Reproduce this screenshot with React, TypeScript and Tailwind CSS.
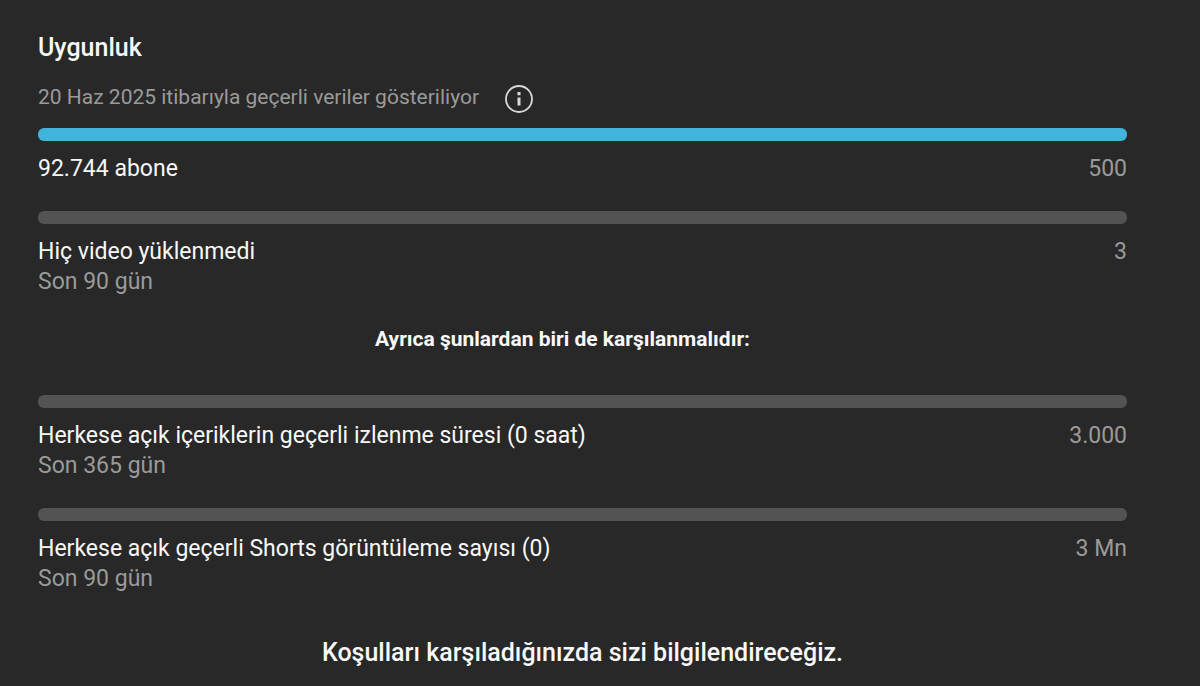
type RequirementProps = { id: string; title: string; period?: string; goal: string; done?: boolean };

function Requirement({ id, title, period, goal, done = false }: RequirementProps) {
  return (
    <div>
      <div
        role="progressbar"
        aria-labelledby={id}
        aria-valuenow={done ? 100 : 0}
        className={`h-[13px] rounded-md ${done ? "bg-[#42b3d9]" : "bg-[#535353]"}`}
      />
      <div className="mt-[13px] flex items-start justify-between text-[23px] leading-[30px] text-[#9a9a9a]">
        <div>
          <p id={id} className="text-[#f8f8f8]">{title}</p>
          {period && <p>{period}</p>}
        </div>
        <p>{goal}</p>
      </div>
    </div>
  );
}

export default function App() {
  return (
    <main className="min-h-screen bg-[#282828] pl-[38px] pr-[73px] pt-[33px] font-['Roboto',sans-serif]">
      <h1 className="text-[25px] leading-[30px] font-medium text-[#f8f8f8]">Uygunluk</h1>
      <div className="mt-[19px] flex items-end gap-6 text-[#9a9a9a]">
        <p className="pb-[3px] text-[21px] leading-[30px]">20 Haz 2025 itibarıyla geçerli veriler gösteriliyor</p>
        <button type="button" aria-label="Bilgi" className="text-[#d8d8d8]">
          <svg className="size-8" viewBox="0 0 32 32" fill="none" stroke="currentColor" strokeWidth="1.8">
            <circle cx="16" cy="16" r="13" />
            <path d="M16 14.5v8M16 9v3.2" strokeWidth="3" />
          </svg>
        </button>
      </div>
      <div className="mt-[13px]">
        <Requirement id="subs" title="92.744 abone" goal="500" done />
      </div>
      <div className="mt-[27px]">
        <Requirement id="uploads" title="Hiç video yüklenmedi" period="Son 90 gün" goal="3" />
      </div>
      <h2 className="mt-[27px] mb-[41px] pr-10 text-center text-[21px] leading-[30px] font-bold text-[#f8f8f8]">
        Ayrıca şunlardan biri de karşılanmalıdır:
      </h2>
      <Requirement id="watch" title="Herkese açık içeriklerin geçerli izlenme süresi (0 saat)" period="Son 365 gün" goal="3.000" />
      <div className="mt-[27px]">
        <Requirement id="shorts" title="Herkese açık geçerli Shorts görüntüleme sayısı (0)" period="Son 90 gün" goal="3 Mn" />
      </div>
      <p className="mt-11 text-center text-[25px] leading-[30px] font-medium text-[#f8f8f8]">
        Koşulları karşıladığınızda sizi bilgilendireceğiz.
      </p>
    </main>
  );
}
